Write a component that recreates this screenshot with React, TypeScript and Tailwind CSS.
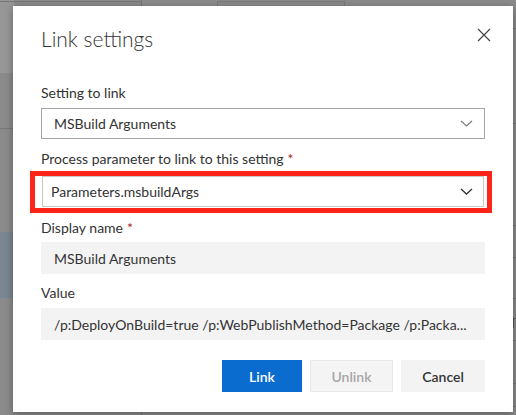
const font = { fontFamily: '"Segoe UI", Lato, "Noto Sans", sans-serif' };

function Chevron({ dark }: { dark?: boolean }) {
  return (
    <svg
      width="13"
      height="7"
      viewBox="0 0 13 7"
      fill="none"
      stroke={dark ? "#333333" : "#7a7a7a"}
      strokeWidth={dark ? 1.3 : 1.1}
    >
      <path d="M1 1l5.5 5L12 1" />
    </svg>
  );
}

function Label({ text, required }: { text: string; required?: boolean }) {
  return (
    <div className="h-5 text-[14px] leading-5 text-[#333333]">
      {text}
      {required && <span className="ml-1 text-[#a4262c]">*</span>}
    </div>
  );
}

function SelectBox({ value, soft }: { value: string; soft?: boolean }) {
  return (
    <div
      className={
        soft
          ? "flex h-[31px] items-center justify-between border border-[#c8c8c8] bg-white pl-[8px] pr-[10px] text-[14px] text-[#333333]"
          : "flex h-[31px] items-center justify-between border border-[#a6a6a6] bg-white pl-[12px] pr-[11px] text-[14px] text-[#333333]"
      }
    >
      <span className="truncate">{value}</span>
      <Chevron dark={soft} />
    </div>
  );
}

function ReadOnly({ value }: { value: string }) {
  return (
    <div className="flex h-[32px] items-center bg-[#f3f3f3] pl-[13px] pr-[18px] text-[14px] text-[#333333]">
      <span className="truncate">{value}</span>
    </div>
  );
}

export default function App() {
  return (
    <div className="relative h-[415px] w-[516px] overflow-hidden bg-[#8b8b8b]" style={font}>
      {/* dimmed page behind the dialog */}
      <div className="absolute left-0 top-0 h-[73px] w-[14px] bg-[#979797]" />
      <div className="absolute left-0 top-[1px] h-px w-[141px] bg-[#777777]" />
      <div className="absolute left-[141px] top-0 h-[8px] w-px bg-[#777777]" />
      <div className="absolute left-[141px] top-[410px] h-[6px] w-px bg-[#777777]" />
      <div className="absolute left-[217px] top-[1px] h-[8px] w-[128px] border border-[#7a7a7a]" />
      <div className="absolute left-0 top-[128px] h-px w-[14px] bg-[#777777]" />
      <div className="absolute left-0 top-[232px] h-[66px] w-[14px] bg-[#7b8693]" />
      {[28, 123, 225, 257, 298, 340, 383, 406].map((y) => (
        <div key={y} className="absolute left-[510px] h-px w-[6px] bg-[#777777]" style={{ top: y }} />
      ))}
      <div className="absolute left-[513px] top-[318px] h-[10px] w-[3px] border-l border-t border-[#555555]" />

      {/* dialog */}
      <div className="absolute left-[13px] top-[6px] flex h-[406px] w-[500px] flex-col bg-white pl-[28px] pr-[28px] shadow-[0_2px_8px_rgba(0,0,0,0.35)]">
        <div className="mt-[19px] flex items-start justify-between">
          <h1 className="text-[21px] font-light leading-7 text-[#333333]">Link settings</h1>
          <button className="mr-[-6px] mt-[3px] text-[#444444]">
            <svg width="14" height="14" viewBox="0 0 14 14" stroke="currentColor" strokeWidth="1.2" fill="none">
              <path d="M1 1l12 12M13 1L1 13" />
            </svg>
          </button>
        </div>

        <div className="mt-[30px]">
          <Label text="Setting to link" />
        </div>
        <div className="mt-[5px]">
          <SelectBox value="MSBuild Arguments" />
        </div>

        <div className="mt-[10px]">
          <Label text="Process parameter to link to this setting" required />
        </div>
        <div className="relative ml-[1px] mr-[1px] mt-[7px]">
          <SelectBox value="Parameters.msbuildArgs" soft />
          <div className="pointer-events-none absolute -bottom-[6px] -left-[12px] -right-[8px] -top-[5px] border-[5px] border-[#ff2419]" />
        </div>

        <div className="mt-[11px]">
          <Label text="Display name" required />
        </div>
        <div className="mt-[4px]">
          <ReadOnly value="MSBuild Arguments" />
        </div>

        <div className="mt-[9px]">
          <Label text="Value" />
        </div>
        <div className="mt-[5px]">
          <ReadOnly value="/p:DeployOnBuild=true /p:WebPublishMethod=Package /p:Packa..." />
        </div>

        <div className="mt-[20px] flex justify-end gap-2">
          <button className="h-8 w-[80px] bg-[#0a6ccf] text-[14px] font-semibold text-white">Link</button>
          <button
            disabled
            className="h-8 w-[83px] border border-[#e8e8e8] bg-[#f4f4f4] text-[14px] font-semibold text-[#a6a6a6]"
          >
            Unlink
          </button>
          <button className="h-8 w-[84px] bg-[#f3f3f3] text-[14px] font-semibold text-[#333333]">Cancel</button>
        </div>
      </div>
    </div>
  );
}
